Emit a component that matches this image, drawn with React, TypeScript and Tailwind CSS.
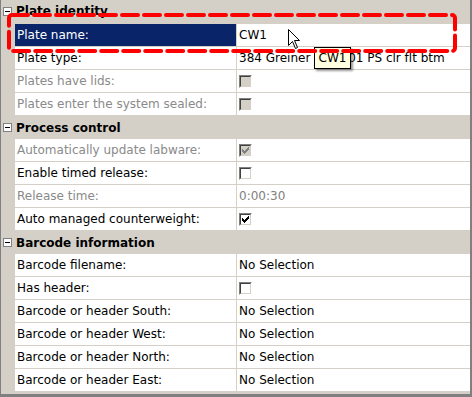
import React from "react";

const FONT = { fontFamily: '"DejaVu Sans", Verdana, sans-serif' };

function Minus() {
  return (
    <div className="ml-[2px] flex h-[9px] w-[9px] items-center justify-center border border-[#808080] bg-white">
      <div className="h-px w-[5px] bg-black" />
    </div>
  );
}

const CHECK_PIXELS: [number, number][] = [
  [6, 0],
  [5, 1], [6, 1],
  [0, 2], [4, 2], [5, 2], [6, 2],
  [0, 3], [1, 3], [3, 3], [4, 3], [5, 3],
  [0, 4], [1, 4], [2, 4], [3, 4], [4, 4],
  [1, 5], [2, 5], [3, 5],
  [2, 6],
];

function CheckBox({ checked, disabled }: { checked?: boolean; disabled?: boolean }) {
  return (
    <div className="h-[13px] w-[13px] border-l border-t border-b border-r border-l-[#808080] border-t-[#808080] border-b-white border-r-white">
      <div
        className={
          "flex h-full w-full items-center justify-center border border-l-[#404040] border-t-[#404040] border-b-[#d4d0c8] border-r-[#d4d0c8] " +
          (disabled ? "bg-[#d4d0c8]" : "bg-white")
        }
      >
        {checked && (
          <svg width="7" height="7" viewBox="0 0 7 7" shapeRendering="crispEdges">
            {CHECK_PIXELS.map(([x, y]) => (
              <rect key={x + "-" + y} x={x} y={y} width="1" height="1" fill={disabled ? "#808080" : "#000"} />
            ))}
          </svg>
        )}
      </div>
    </div>
  );
}

function Header({ title, first }: { title: string; first?: boolean }) {
  return (
    <div className={"flex items-center " + (first ? "h-[24px] pb-[2px]" : "h-[23px]")}>
      <Minus />
      <span className="ml-[4px] text-[12px] font-bold text-black">{title}</span>
    </div>
  );
}

function Row({
  label,
  value,
  disabled,
  selected,
}: {
  label: string;
  value: React.ReactNode;
  disabled?: boolean;
  selected?: boolean;
}) {
  return (
    <div className="flex h-[23px]">
      <div className="w-[14px] shrink-0" />
      <div className="flex flex-1 border-b border-[#d4d0c8] bg-white">
        <div
          className={
            "flex w-[222px] shrink-0 items-center border-r border-[#d4d0c8] pl-[2px] text-[12px] " +
            (selected ? "bg-[#0a246a] text-white" : disabled ? "text-[#8a8a8a]" : "text-black")
          }
        >
          {label}
        </div>
        <div className="flex flex-1 items-center pl-[2px] text-[12px] text-black whitespace-pre overflow-hidden">
          {value}
        </div>
      </div>
    </div>
  );
}

export default function App() {
  return (
    <div
      className="relative h-[397px] w-[472px] overflow-hidden border-b-[3px] border-l border-r-2 border-[#808080] bg-[#d4d0c8]"
      style={FONT}
    >
      <Header title="Plate identity" first />
      <Row label="Plate name:" value="CW1" selected />
      <Row
        label="Plate type:"
        value={
          <>
            <span>384 Greiner </span>
            <span className="inline-block w-[34px] shrink-0" />
            <span>01 PS clr flt btm</span>
          </>
        }
      />
      <Row label="Plates have lids:" value={<CheckBox disabled />} disabled />
      <Row label="Plates enter the system sealed:" value={<CheckBox disabled />} disabled />
      <Header title="Process control" />
      <Row label="Automatically update labware:" value={<CheckBox disabled checked />} disabled />
      <Row label="Enable timed release:" value={<CheckBox />} />
      <Row label="Release time:" value={<span className="text-[#808080]">0:00:30</span>} disabled />
      <Row label="Auto managed counterweight:" value={<CheckBox checked />} />
      <Header title="Barcode information" />
      <Row label="Barcode filename:" value="No Selection" />
      <Row label="Has header:" value={<CheckBox />} />
      <Row label="Barcode or header South:" value="No Selection" />
      <Row label="Barcode or header West:" value="No Selection" />
      <Row label="Barcode or header North:" value="No Selection" />
      <Row label="Barcode or header East:" value="No Selection" />

      {/* tooltip */}
      <div className="absolute left-[313px] top-[47px] flex h-[22px] w-[37px] items-center justify-center border border-black bg-[#ffffe1] text-[12px] text-black shadow-[2px_2px_2px_rgba(0,0,0,0.4)]">
        CW1
      </div>

      {/* cursor */}
      <svg className="absolute left-[287px] top-[29px]" width="13" height="21" viewBox="0 0 13 21">
        <path
          d="M0.5 0.5 V16.5 L4.5 12.5 L7.5 19.5 L9.5 18.5 L6.5 11.5 H11.5 Z"
          fill="#fff"
          stroke="#000"
          strokeWidth="1"
          strokeLinejoin="miter"
        />
      </svg>

      {/* red dashed annotation */}
      <svg className="pointer-events-none absolute left-0 top-0" width="472" height="60">
        <rect
          x="8"
          y="15"
          width="446"
          height="36"
          rx="3"
          fill="none"
          stroke="#ff0000"
          strokeWidth="4"
          strokeDasharray="16 6"
          strokeLinecap="round"
        />
      </svg>
    </div>
  );
}
